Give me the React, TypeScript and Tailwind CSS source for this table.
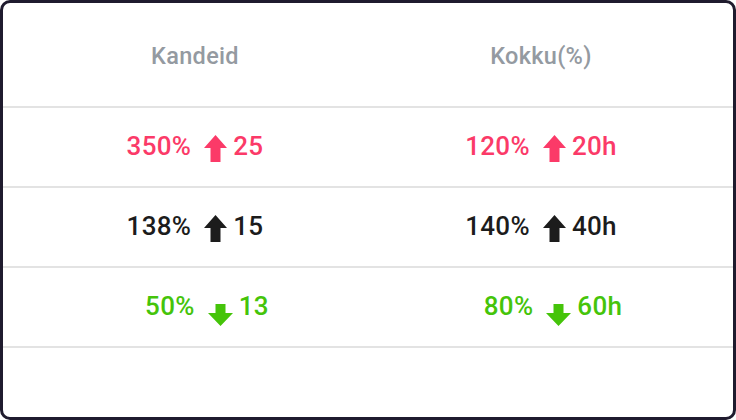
const ROWS = [
  { a: '350%', b: '25', c: '120%', d: '20h', tone: 'text-[#fb3a68]', dir: 'up' },
  { a: '138%', b: '15', c: '140%', d: '40h', tone: 'text-[#1c1c1c]', dir: 'up' },
  { a: '50%', b: '13', c: '80%', d: '60h', tone: 'text-[#45c40a]', dir: 'down' },
] as const;

function Arrow({ dir }: { dir: 'up' | 'down' }) {
  if (dir === 'up') {
    return (
      <svg viewBox="0 0 23 27" className="mt-[5px] h-[27px] w-[23px] shrink-0" fill="currentColor">
        <polygon points="11.5,0 23,13 16.5,13 16.5,27 6.5,27 6.5,13 0,13" />
      </svg>
    );
  }
  return (
    <svg viewBox="0 0 25 22" className="mt-[17px] h-[22px] w-[25px] shrink-0" fill="currentColor">
      <polygon points="7.5,0 17.5,0 17.5,9 25,9 12.5,22 0,9 7.5,9" />
    </svg>
  );
}

function Cell({ pct, val, dir, shift }: { pct: string; val: string; dir: 'up' | 'down'; shift: boolean }) {
  return (
    <div className={`flex items-center justify-center ${shift ? 'pl-6' : ''}`}>
      <span>{pct}</span>
      <span className="ml-[13px]">
        <Arrow dir={dir} />
      </span>
      <span className="ml-[6px]">{val}</span>
    </div>
  );
}

export default function App() {
  return (
    <div className="h-[420px] w-[736px] bg-white font-['Roboto',sans-serif]">
      <div className="flex h-full flex-col rounded-[10px] border-[3px] border-[#1f1b2e] bg-white">
        <div className="grid h-[105px] shrink-0 grid-cols-2 items-center border-b-2 border-[#e3e3e3] px-[19px] pt-[4px] text-[23.5px] font-medium tracking-[0.3px] text-[#949aa1]">
          <div className="text-center">Kandeid</div>
          <div className="text-center">Kokku(%)</div>
        </div>
        {ROWS.map((r) => (
          <div
            key={r.a}
            className={`grid h-[80px] shrink-0 grid-cols-2 items-center border-b-2 border-[#e3e3e3] px-[19px] pb-[2px] text-[26px] font-medium tracking-[0.3px] ${r.tone}`}
          >
            <Cell pct={r.a} val={r.b} dir={r.dir} shift={r.dir === 'down'} />
            <Cell pct={r.c} val={r.d} dir={r.dir} shift={r.dir === 'down'} />
          </div>
        ))}
      </div>
    </div>
  );
}
